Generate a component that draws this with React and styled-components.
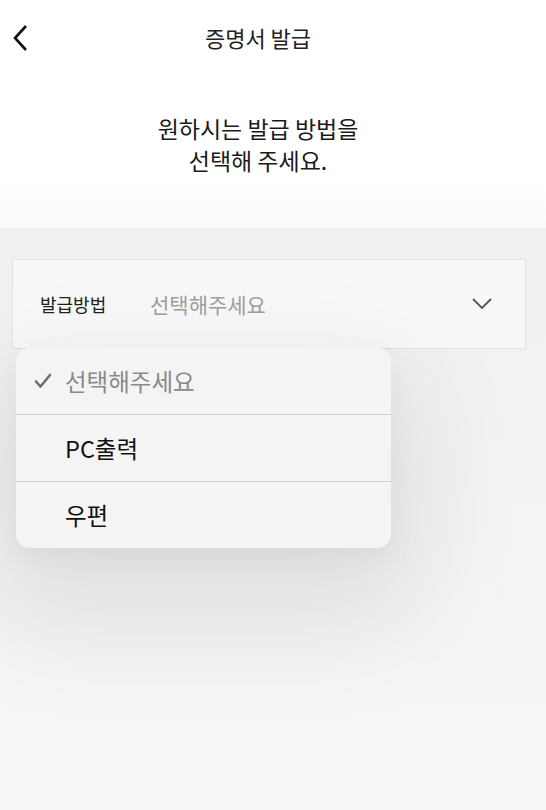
import React from "react";
import styled, { createGlobalStyle } from "styled-components";

const GlobalStyle = createGlobalStyle`
  html, body {
    margin: 0;
    padding: 0;
    background: #f7f7f7;
  }
  body {
    font-family: "Noto Sans CJK KR", "Noto Sans", sans-serif;
    color: #222;
  }
`;

const Page = styled.div`
  position: relative;
  width: 546px;
  min-height: 810px;
  background: linear-gradient(#f0f0f0 228px, #f3f3f3 500px, #f7f7f7 810px);
  overflow: hidden;
`;

const Top = styled.section`
  position: relative;
  z-index: 2;
  background: linear-gradient(#ffffff 0%, #ffffff 80%, #fafafa 100%);
  height: 228px;
  padding-right: 30px;
  display: flex;
  flex-direction: column;
`;

const Header = styled.header`
  position: relative;
  height: 76px;
  display: flex;
  align-items: center;
  justify-content: center;
`;

const BackButton = styled.button`
  position: absolute;
  left: 6px;
  top: 22px;
  width: 28px;
  height: 32px;
  border: none;
  background: none;
  padding: 0;
  display: flex;
  align-items: center;
  justify-content: center;
`;

const Title = styled.h1`
  margin: 0 0 2px;
  font-size: 22px;
  font-weight: 400;
  color: #222;
`;

const Intro = styled.p`
  margin: 36px 0 0;
  text-align: center;
  font-size: 23px;
  line-height: 32px;
  color: #1a1a1a;
`;

const Content = styled.section`
  position: relative;
  z-index: 3;
  padding: 31px 20px 0 12px;
`;

const SelectBox = styled.div`
  height: 88px;
  border: 1px solid #e3e3e3;
  background: #f8f8f8;
  display: flex;
  align-items: center;
  padding: 0 32px 0 27px;
`;

const Label = styled.span`
  font-size: 18px;
  color: #222;
  width: 110px;
`;

const Value = styled.span`
  flex: 1;
  font-size: 21px;
  color: #a0a0a0;
`;

const Popup = styled.ul`
  position: absolute;
  z-index: 4;
  left: 16px;
  top: 348px;
  width: 375px;
  margin: 0;
  padding: 0;
  list-style: none;
  background: #f4f4f4;
  border-radius: 14px;
  box-shadow: 0 50px 110px 30px rgba(0, 0, 0, 0.08),
    0 10px 30px rgba(0, 0, 0, 0.05);
  overflow: hidden;
`;

const Option = styled.li`
  height: 66px;
  display: flex;
  align-items: center;
  padding-left: 18px;
  font-size: 23.5px;
  color: ${(p) => (p.$muted ? "#8a8a8a" : "#111")};
  & + & {
    border-top: 1px solid #d2d2d2;
  }
`;

const Check = styled.span`
  width: 31px;
  display: flex;
  align-items: center;
`;

const options = [
  { label: "선택해주세요", selected: true },
  { label: "PC출력" },
  { label: "우편" },
];

export default function App() {
  return (
    <Page>
      <GlobalStyle />
      <Top>
        <Header>
          <BackButton aria-label="뒤로">
            <svg width="18" height="28" viewBox="0 0 18 28">
              <path d="M15 2 L4 14 L15 26" fill="none" stroke="#111" strokeWidth="2.6" />
            </svg>
          </BackButton>
          <Title>증명서 발급</Title>
        </Header>
        <Intro>
          원하시는 발급 방법을
          <br />
          선택해 주세요.
        </Intro>
      </Top>
      <Content>
        <SelectBox>
          <Label>발급방법</Label>
          <Value>선택해주세요</Value>
          <svg width="22" height="14" viewBox="0 0 22 14">
            <path d="M2 2 L11 11 L20 2" fill="none" stroke="#555" strokeWidth="1.8" />
          </svg>
        </SelectBox>
      </Content>
      <Popup>
        {options.map((o) => (
          <Option key={o.label} $muted={o.selected}>
            <Check>
              {o.selected && (
                <svg width="18" height="16" viewBox="0 0 18 16">
                  <path d="M2 8.5 L6.5 13.5 L16 2" fill="none" stroke="#6e6e6e" strokeWidth="2.6" strokeLinecap="round" strokeLinejoin="round" />
                </svg>
              )}
            </Check>
            {o.label}
          </Option>
        ))}
      </Popup>
    </Page>
  );
}
